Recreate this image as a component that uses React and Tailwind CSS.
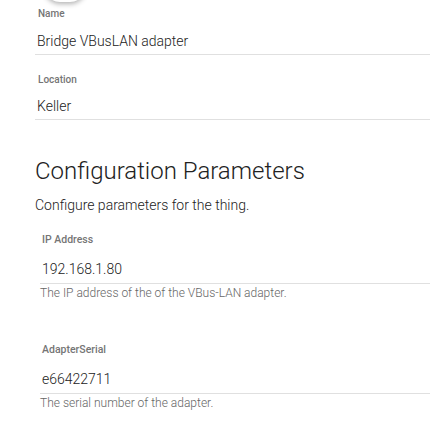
import React from "react";

export default function App() {
  return (
    <div className="relative w-[430px] h-[431px] overflow-hidden bg-white" style={{ fontFamily: "Roboto, 'Liberation Sans', sans-serif" }}>
      <div className="absolute left-[44px] top-[-30px] w-[42px] h-[32px] rounded-full bg-white shadow-[0_2px_5px_rgba(0,0,0,0.3)]" />
      <div className="pl-[35px]">
        <div className="pt-[8px] pl-[3px] text-[10px] leading-[12px] font-medium text-[#757575]">Name</div>
        <div className="mt-[11px] pb-[3px] border-b border-[#e0e0e0]">
          <div className="pl-[2px] text-[14px] leading-[20px] font-light text-[#222]">Bridge VBusLAN adapter</div>
        </div>
        <div className="mt-[19px] pl-[3px] text-[10px] leading-[12px] font-medium text-[#757575]">Location</div>
        <div className="mt-[10px] pb-[3px] border-b border-[#e0e0e0]">
          <div className="pl-[2px] text-[14px] leading-[20px] font-light text-[#222]">Keller</div>
        </div>

        <h1 className="mt-[37px] text-[24px] leading-[28px] font-light text-[#222]">Configuration Parameters</h1>
        <p className="mt-[12px] text-[14px] leading-[16px] font-light text-[#222]">Configure parameters for the thing.</p>

        <div className="pl-[5px]">
          <div className="mt-[21px] pl-[2px] text-[10.5px] leading-[12px] font-medium text-[#757575]">IP Address</div>
          <div className="mt-[13px] pb-[4px] border-b border-[#e0e0e0]">
            <div className="pl-[2px] text-[14px] leading-[20px] font-light text-[#222]">192.168.1.80</div>
          </div>
          <div className="mt-[2px] text-[12px] leading-[14px] font-light text-[#666]">The IP address of the of the VBus-LAN adapter.</div>

          <div className="mt-[44px] pl-[2px] text-[10.5px] leading-[12px] font-medium text-[#757575]">AdapterSerial</div>
          <div className="mt-[13px] pb-[4px] border-b border-[#e0e0e0]">
            <div className="pl-[2px] text-[14px] leading-[20px] font-light text-[#222]">e66422711</div>
          </div>
          <div className="mt-[2px] text-[12px] leading-[14px] font-light text-[#666]">The serial number of the adapter.</div>
        </div>
      </div>
    </div>
  );
}
